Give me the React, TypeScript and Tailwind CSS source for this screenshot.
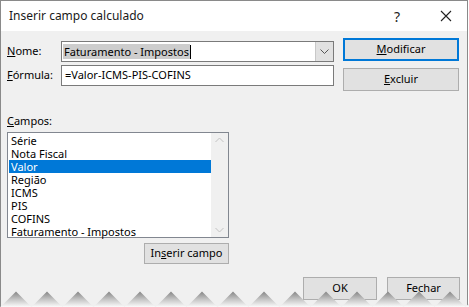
const items = ["Série", "Nota Fiscal", "Valor", "Região", "ICMS", "PIS", "COFINS", "Faturamento - Impostos"];

function Zigzag() {
  const pts: string[] = ["0,16"];
  for (let k = -1; k < 17; k++) {
    const v = 0.5 + 31 * k;
    pts.push(`${v},16`, `${v + 15.5},0.5`);
  }
  pts.push("469,16");
  return (
    <svg className="absolute left-0 bottom-0" width="469" height="16" viewBox="0 0 469 16">
      <defs>
        <linearGradient id="tear" x1="0" y1="0" x2="0" y2="1">
          <stop offset="0" stopColor="#858585" />
          <stop offset="0.5" stopColor="#c4c4c4" />
          <stop offset="1" stopColor="#fbfbfb" />
        </linearGradient>
      </defs>
      <polygon points={pts.join(" ")} fill="url(#tear)" />
    </svg>
  );
}

export default function App() {
  return (
    <div className="relative w-[469px] h-[307px] overflow-hidden bg-white text-[11px] text-black" style={{ fontFamily: '"Noto Sans", "Liberation Sans", sans-serif' }}>
      <div className="w-[468px] h-[307px] border-l border-t border-r border-[#8a8a8a] bg-[#f0f0f0]">
        {/* Title bar */}
        <div className="h-[30px] bg-white flex items-center pl-[8px]">
          <span className="text-[12px] text-[#1a1a1a]">Inserir campo calculado</span>
          <span className="ml-auto mr-[40px] text-[14px] text-[#222]">?</span>
          <svg width="12" height="12" viewBox="0 0 12 12" className="mr-[15px]">
            <path d="M1 1 L11 11 M11 1 L1 11" stroke="#222" strokeWidth="1.1" />
          </svg>
        </div>

        {/* Body */}
        <div className="pl-[6px]">
          <div className="flex items-start">
            <div className="mt-[10px] w-[327px] flex flex-col gap-[3px]">
              <div className="flex items-center">
                <label className="w-[54px]"><u>N</u>ome:</label>
                <div className="relative w-[273px] h-[21px] border border-[#7a7a7a] bg-white flex items-center">
                  <span className="ml-[1px] px-[1px] bg-[#cdcdcd] leading-[15px]">Faturamento - Impostos</span>
                  <span className="w-px h-[14px] bg-black" />
                  <div className="absolute right-0 top-0 w-[18px] h-[19px] bg-[#e1e1e1] border-l border-[#c8c8c8] flex items-center justify-center">
                    <svg width="9" height="6" viewBox="0 0 9 6">
                      <path d="M0.5 0.5 L4.5 4.5 L8.5 0.5" fill="none" stroke="#555" strokeWidth="1" />
                    </svg>
                  </div>
                </div>
              </div>
              <div className="flex items-center">
                <label className="w-[54px]"><u>F</u>órmula:</label>
                <div className="w-[273px] h-[21px] border border-[#7a7a7a] bg-white flex items-center pl-[3px]">
                  =Valor-ICMS-PIS-COFINS
                </div>
              </div>
            </div>
            <div className="ml-[9px] mt-[7px] w-[116px] flex flex-col gap-[7px]">
              <button className="h-[23px] border-2 border-[#0078d7] bg-[#e1e1e1]"><u>M</u>odificar</button>
              <button className="h-[23px] border border-[#adadad] bg-[#e1e1e1]"><u>E</u>xcluir</button>
            </div>
          </div>

          <div className="mt-[22px] leading-[16px]"><u>C</u>ampos:</div>
          <div className="mt-[3px] w-[222px] h-[106px] border border-[#828790] bg-white flex">
            <ul className="flex-1 pt-[1px] pl-[1px]">
              {items.map((it) => (
                <li key={it} className={`h-[13px] leading-[13px] pl-[2px] ${it === "Valor" ? "bg-[#0078d7] text-white" : ""}`}>
                  {it}
                </li>
              ))}
            </ul>
            <div className="w-[17px] bg-[#f0f0f0] flex flex-col justify-between items-center py-[4px]">
              <svg width="9" height="6" viewBox="0 0 9 6">
                <path d="M0.5 5 L4.5 1 L8.5 5" fill="none" stroke="#c2c2c2" strokeWidth="1" />
              </svg>
              <svg width="9" height="6" viewBox="0 0 9 6">
                <path d="M0.5 1 L4.5 5 L8.5 1" fill="none" stroke="#c2c2c2" strokeWidth="1" />
              </svg>
            </div>
          </div>
          <div className="w-[222px] flex justify-end mt-[5px]">
            <button className="w-[85px] h-[21px] border border-[#adadad] bg-[#e1e1e1]">In<u>s</u>erir campo</button>
          </div>

          <div className="flex justify-end gap-[10px] mr-[7px] mt-[13px]">
            <button className="w-[74px] h-[23px] border border-[#adadad] bg-[#e1e1e1]">OK</button>
            <button className="w-[73px] h-[23px] border border-[#adadad] bg-[#e1e1e1]">Fechar</button>
          </div>
        </div>
      </div>
      <Zigzag />
    </div>
  );
}
